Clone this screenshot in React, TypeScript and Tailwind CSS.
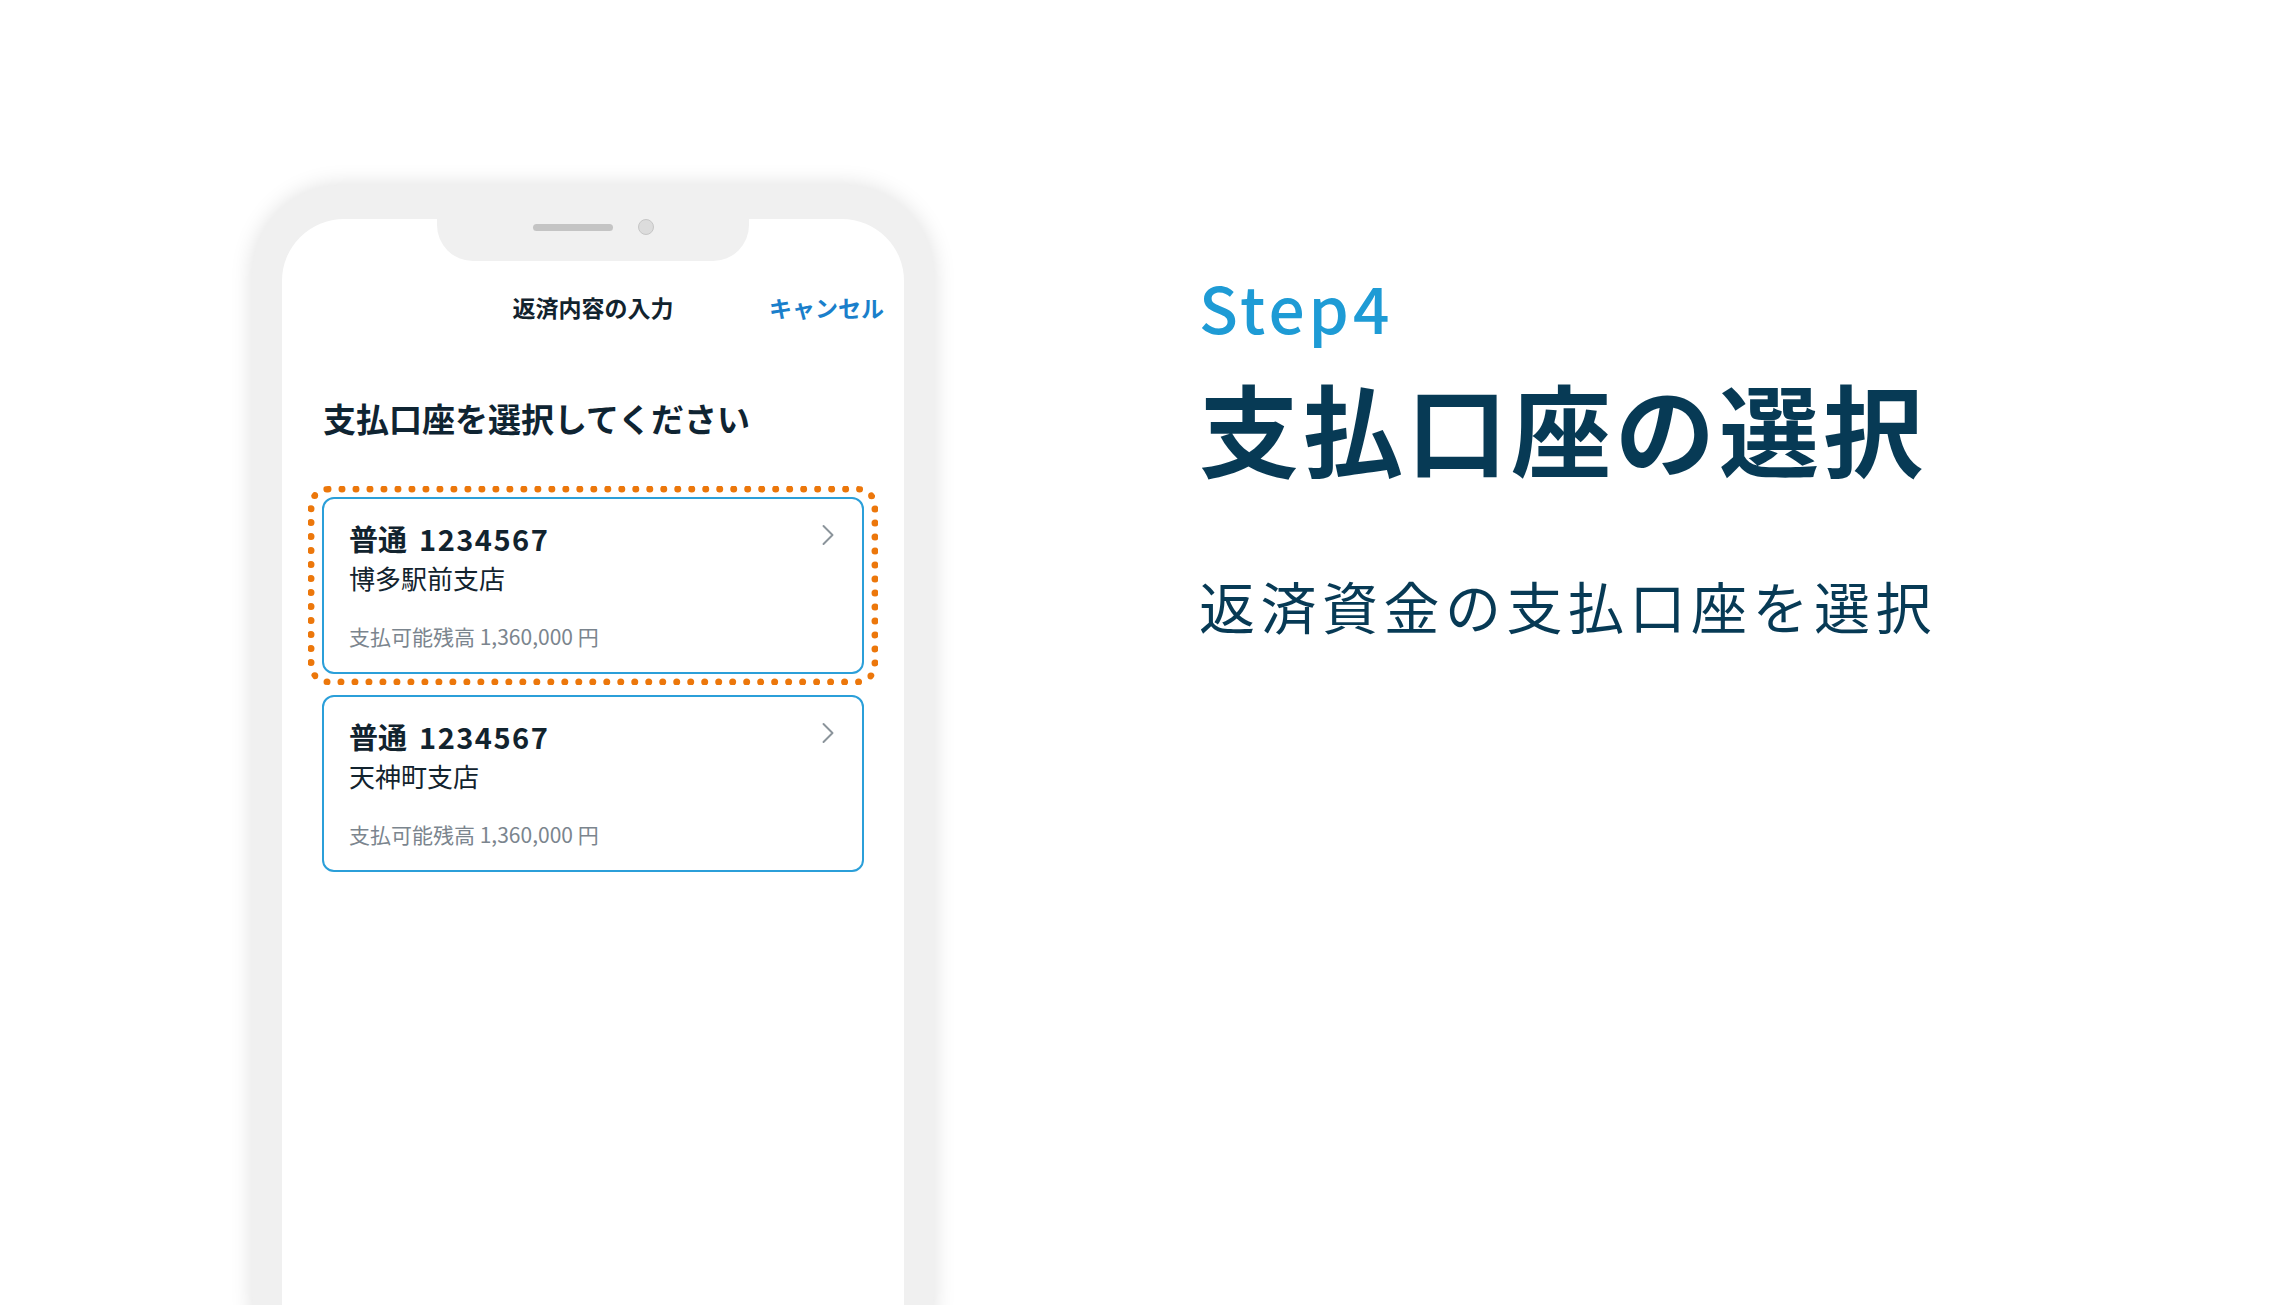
import { ChevronRight } from 'lucide-react'

const jp = '[font-family:"Noto_Sans_CJK_JP","Noto_Sans",sans-serif]'

type Account = {
  kind: string
  number: string
  branch: string
  balance: string
  highlighted?: boolean
}

const accounts: Account[] = [
  { kind: '普通', number: '1234567', branch: '博多駅前支店', balance: '1,360,000', highlighted: true },
  { kind: '普通', number: '1234567', branch: '天神町支店', balance: '1,360,000' },
]

function AccountCard({ account }: { account: Account }) {
  return (
    <div className="relative">
      {account.highlighted && (
        <div className="pointer-events-none absolute -top-[11px] -bottom-[11px] -left-[14px] -right-[14px] rounded-[20px] border-[7px] border-dotted border-[#ec770b]" />
      )}
      <div className="flex h-[177px] justify-between rounded-[12px] border-2 border-[#2b9fd9] bg-white pl-[25px] pr-[16px]">
        <div className="flex flex-col pt-[25px]">
          <div className="flex items-center gap-[12px] text-[29px] leading-none font-bold text-[#12232e]">
            <span>{account.kind}</span>
            <span className="tracking-[1.5px]">{account.number}</span>
          </div>
          <div className="mt-[12px] text-[26px] leading-none text-[#12232e]">{account.branch}</div>
          <div className="mt-[35px] text-[21px] leading-none text-[#7b858e]">
            支払可能残高 {account.balance} 円
          </div>
        </div>
        <ChevronRight className="mt-[18px] h-[36px] w-[36px] text-[#8b949b]" strokeWidth={1.3} aria-hidden="true" />
      </div>
    </div>
  )
}

function Phone() {
  return (
    <div className="mt-[185px] h-[1200px] w-[682px] shrink-0 rounded-[90px] bg-[#f0f0f0] px-[30px] pt-[34px] shadow-[0_0_22px_rgba(0,0,0,0.13)]">
      <div className="flex h-full flex-col rounded-t-[62px] bg-white">
        <div className="mx-auto flex h-[42px] w-[312px] justify-center gap-[25px] rounded-b-[36px] bg-[#f0f0f0]">
          <div className="flex h-[16px] items-center">
            <div className="h-[7px] w-[80px] rounded-full bg-[#c4c4c4]" />
          </div>
          <div className="h-[16px] w-[16px] rounded-full border border-[#c6c6c6] bg-[#dcdcdc]" />
        </div>

        <div className="mt-[35px] grid grid-cols-[1fr_auto_1fr] items-center text-[23px] leading-none font-bold">
          <div />
          <div className="text-[#12232e]">返済内容の入力</div>
          <div className="pr-[20px] text-right text-[#1a7fcb]">キャンセル</div>
        </div>

        <div className="px-[40px]">
          <h2 className="mt-[83px] pl-[1px] text-[33px] leading-none font-bold text-[#0f2432]">
            支払口座を選択してください
          </h2>
          <div className="mt-[62px] flex flex-col gap-[21px]">
            {accounts.map((account, i) => (
              <AccountCard key={i} account={account} />
            ))}
          </div>
        </div>
      </div>
    </div>
  )
}

export default function App() {
  return (
    <div className={`flex h-[1305px] w-[2290px] overflow-hidden bg-white pl-[252px] ${jp}`}>
      <Phone />
      <div className="ml-[265px] flex flex-col pt-[274px] text-[#073a55]">
        <div className="text-[64px] leading-none font-medium tracking-[4px] text-[#1e9bd5]">Step4</div>
        <h1 className="mt-[39px] text-[100px] leading-none font-bold tracking-[4px]">支払口座の選択</h1>
        <p className="mt-[100px] text-[56px] leading-none tracking-[5.5px]">返済資金の支払口座を選択</p>
      </div>
    </div>
  )
}
